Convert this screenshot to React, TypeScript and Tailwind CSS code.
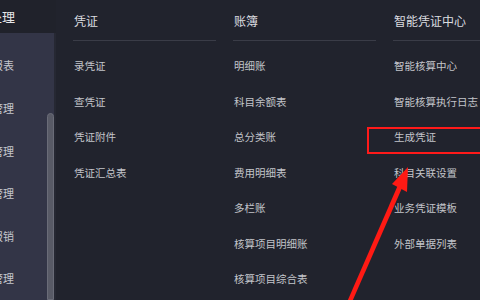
const font = { fontFamily: '"Noto Sans CJK SC", "Noto Sans", sans-serif' };

const sideItems = ["报表", "管理", "管理", "管理", "报销", "管理"];

const columns: { title: string; items: string[] }[] = [
  { title: "凭证", items: ["录凭证", "查凭证", "凭证附件", "凭证汇总表"] },
  {
    title: "账簿",
    items: ["明细账", "科目余额表", "总分类账", "费用明细表", "多栏账", "核算项目明细账", "核算项目综合表"],
  },
  {
    title: "智能凭证中心",
    items: ["智能核算中心", "智能核算执行日志", "生成凭证", "科目关联设置", "业务凭证模板", "外部单据列表"],
  },
];

function Sidebar() {
  return (
    <div className="relative flex w-[56px] shrink-0 flex-col overflow-hidden">
      <div className="flex h-[42px] items-center bg-[#20222b]">
        <span className="ml-[-11px] whitespace-nowrap text-[13px] text-[#e6e7ea]">处理</span>
      </div>
      <div className="flex flex-1 bg-[#333547]">
        <div className="flex w-[47px] flex-col pt-[11px]">
          {sideItems.map((t, i) => (
            <div key={i} className="flex h-[42.6px] items-center">
              <span className="ml-[-8px] whitespace-nowrap text-[11px] text-[#c4c6cc]">{t}</span>
            </div>
          ))}
        </div>
        <div className="flex w-[7px] flex-col pt-[80px]">
          <div className="flex-1 rounded-t-[4px] border border-[#6a6c78] bg-[#585a66]" />
        </div>
        <div className="w-[2px] bg-[#262833]" />
      </div>
    </div>
  );
}

function Column({ title, items }: { title: string; items: string[] }) {
  return (
    <div className="flex w-[143px] shrink-0 flex-col">
      <div className="flex h-[41px] items-center border-b border-[#3a3c47] pl-[1px] pt-[2px]">
        <span className="whitespace-nowrap text-[12px] text-[#dcdde0]">{title}</span>
      </div>
      <div className="flex flex-col pt-[7px] pl-[1px]">
        {items.map((t) => (
          <div key={t} className="flex h-[35.6px] items-center">
            <span className="whitespace-nowrap text-[10.5px] text-[#c3c5ca]">{t}</span>
          </div>
        ))}
      </div>
    </div>
  );
}

export default function App() {
  return (
    <div className="relative flex h-[300px] w-[480px] overflow-hidden bg-[#21232d]" style={font}>
      <Sidebar />
      <div className="flex gap-[17px] pl-[17px]">
        {columns.map((c) => (
          <Column key={c.title} {...c} />
        ))}
      </div>
      <div className="absolute left-[367px] top-[127px] h-[27px] w-[130px] border-2 border-[#ff1a1a]" />
      <svg className="absolute left-0 top-0" width="480" height="300" viewBox="0 0 480 300">
        <polygon points="347,302 352,302 402,188 398,185" fill="#ff1a14" />
        <polygon points="408,167 407,192 392,184" fill="#ff1a14" />
      </svg>
    </div>
  );
}
